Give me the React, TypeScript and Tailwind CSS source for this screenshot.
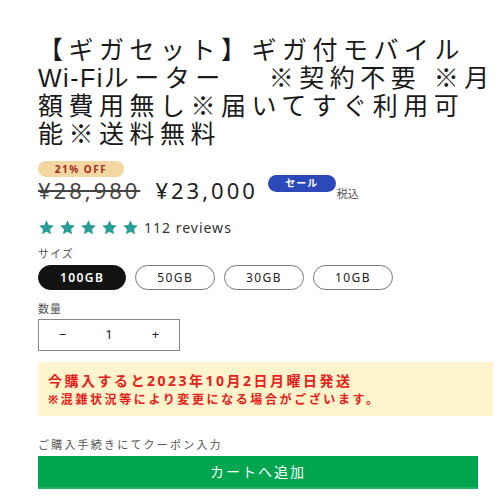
import React, { useState } from 'react';

const sizes = ['100GB', '50GB', '30GB', '10GB'];

const Star: React.FC = () => (
  <svg viewBox="0 0 24 24" className="w-[17px] h-[17px]" fill="#2a9d98">
    <path d="M12 1.8l3.1 6.6 7.2.9-5.3 5 1.4 7.1L12 17.9l-6.4 3.5 1.4-7.1-5.3-5 7.2-.9z" />
  </svg>
);

const App: React.FC = () => {
  const [size, setSize] = useState('100GB');
  const [qty, setQty] = useState(1);

  return (
    <div
      className="w-[501px] h-[501px] overflow-hidden bg-white text-[#222] pl-[38px] pt-[36px]"
      style={{ fontFamily: '"Noto Sans", "Noto Sans CJK JP", sans-serif' }}
    >
      {/* Liberation Sans first keeps the line boxes inside the tight 28px leading */}
      <h1
        className="w-[450px] text-[25px] leading-[28px] tracking-[5.5px] text-[#1a1a1a] whitespace-nowrap"
        style={{ fontFamily: '"Liberation Sans", "Noto Sans CJK JP", sans-serif' }}
      >
        <span className="block">【ギガセット】ギガ付モバイル</span>
        <span className="block">
          <span className="tracking-[1.5px]">Wi-Fi</span>ルーター　 ※契約不要 ※月
        </span>
        <span className="block">額費用無し※届いてすぐ利用可</span>
        <span className="block">能※送料無料</span>
      </h1>

      <div className="mt-[13px] flex">
        <span className="h-[16px] w-[86px] rounded-full bg-[#f4d6a0] text-[#a4291f] text-[10px] font-bold tracking-[1.5px] flex items-center justify-center">
          21% OFF
        </span>
      </div>

      <div className="mt-[1px] flex items-start h-[24px]">
        <s className="text-[22px] leading-[24px] tracking-[3px] text-[#444]">¥28,980</s>
        <span className="ml-[15px] text-[22px] leading-[24px] tracking-[3px] text-[#222]">¥23,000</span>
        <span className="ml-[10px] mt-[-3px] shrink-0 h-[17px] w-[68px] rounded-full bg-[#2c48b9] text-white text-[10px] font-bold tracking-[1px] flex items-center justify-center">
          セール
        </span>
        <span className="ml-[1px] mt-[9px] text-[11px] leading-[13px] text-[#555]">税込</span>
      </div>

      <div className="mt-[15px] flex items-center h-[20px]">
        <div className="flex gap-[4px]">
          {[0, 1, 2, 3, 4].map((i) => (
            <Star key={i} />
          ))}
        </div>
        <span className="ml-[5px] text-[14px] tracking-[1px] text-[#333]">112 reviews</span>
      </div>

      <div className="mt-[9px] text-[11px] leading-[16px] tracking-[1px] text-[#555]">サイズ</div>

      <div className="mt-[3px] flex gap-[9px]">
        {sizes.map((s) => (
          <button
            key={s}
            onClick={() => setSize(s)}
            className={`h-[25px] px-[21px] rounded-full border text-[12px] tracking-[1.4px] ${
              size === s ? 'bg-[#121212] border-[#121212] text-white font-semibold' : 'bg-white border-[#777] text-[#222]'
            }`}
          >
            {s}
          </button>
        ))}
      </div>

      <div className="mt-[11px] text-[11px] leading-[16px] tracking-[1px] text-[#555]">数量</div>

      <div className="mt-[2px] w-[142px] h-[32px] border border-[#888] flex items-center text-[13px] text-[#222]">
        <button className="w-[47px] h-full flex items-center justify-center" onClick={() => setQty(Math.max(1, qty - 1))}>
          −
        </button>
        <span className="w-[46px] text-center">{qty}</span>
        <button className="w-[47px] h-full flex items-center justify-center" onClick={() => setQty(qty + 1)}>
          +
        </button>
      </div>

      <div className="mt-[11px] w-[455px] h-[54px] bg-[#fff4cc] pl-[10px] pt-[10px] text-[#e8201a] font-bold">
        <div className="text-[14px] leading-[18px] tracking-[2.5px]">今購入すると2023年10月2日月曜日発送</div>
        <div className="mt-[2px] text-[12px] leading-[16px] tracking-[2.6px]">※混雑状況等により変更になる場合がございます。</div>
      </div>

      <div className="mt-[21px] text-[11px] leading-[16px] tracking-[2.2px] text-[#555]">ご購入手続きにてクーポン入力</div>

      <button className="mt-[3px] w-[440px] h-[33px] bg-[#00a54f] border-b-2 border-[#22b45f] text-white text-[14px] tracking-[2px] flex items-center justify-center">
        カートへ追加
      </button>
    </div>
  );
};

export default App;
